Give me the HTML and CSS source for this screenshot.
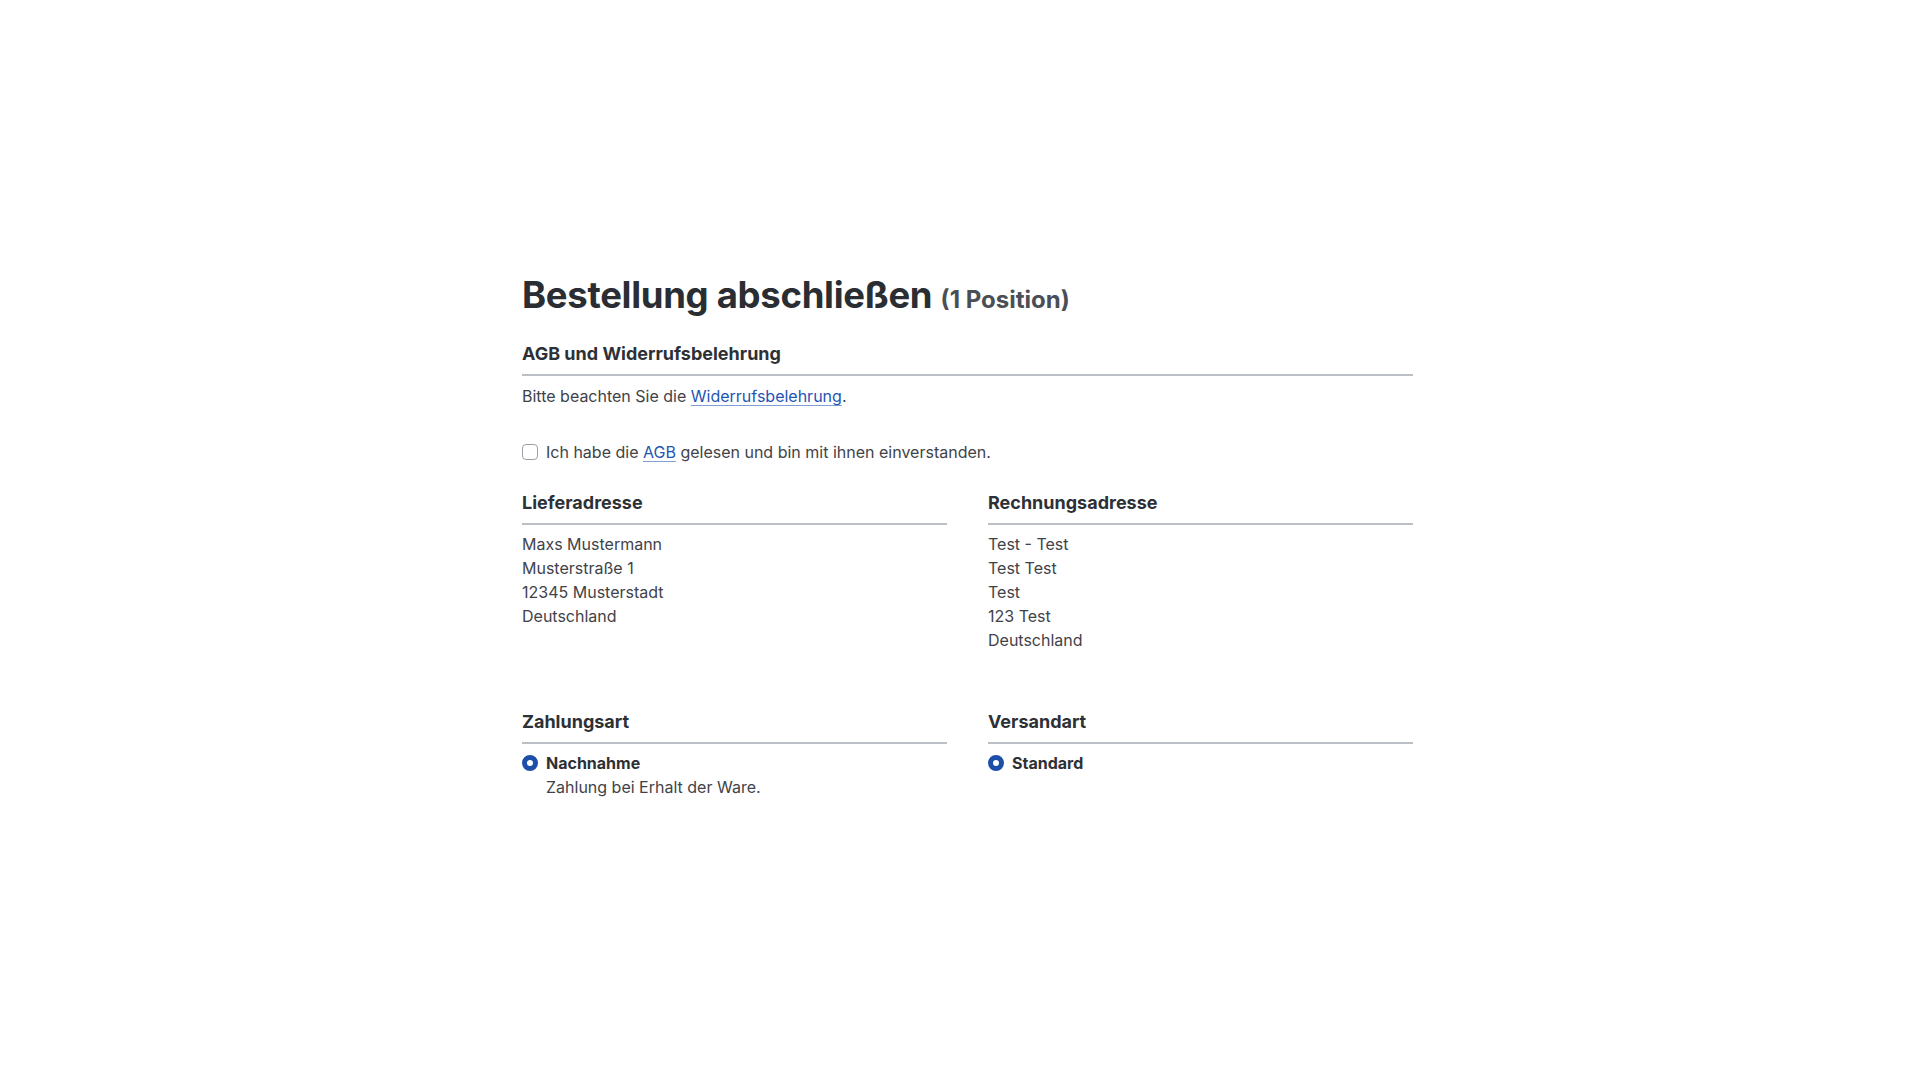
FILE: index.html
```html
<!DOCTYPE html>
<html lang="de">
<head>
  <meta charset="UTF-8">
  <meta name="viewport" content="width=device-width, initial-scale=1.0">
  <title>Bestellung abschließen</title>
  <link rel="stylesheet" href="styles.css">
</head>
<body>
  <main class="checkout">
    <h1 class="checkout__title">Bestellung abschließen <small>(1 Position)</small></h1>

    <section class="block">
      <h3 class="block__title">AGB und Widerrufsbelehrung</h3>
      <p class="block__text">Bitte beachten Sie die <a href="#">Widerrufsbelehrung</a>.</p>
      <label class="check">
        <input type="checkbox" class="check__box">
        <span>Ich habe die <a href="#">AGB</a> gelesen und bin mit ihnen einverstanden.</span>
      </label>
    </section>

    <div class="cols cols--address">
      <section class="block">
        <h3 class="block__title">Lieferadresse</h3>
        <address class="address">
          Maxs Mustermann<br>
          Musterstraße 1<br>
          12345 Musterstadt<br>
          Deutschland
        </address>
      </section>
      <section class="block">
        <h3 class="block__title">Rechnungsadresse</h3>
        <address class="address">
          Test - Test<br>
          Test Test<br>
          Test<br>
          123 Test<br>
          Deutschland
        </address>
      </section>
    </div>

    <div class="cols">
      <section class="block">
        <h3 class="block__title">Zahlungsart</h3>
        <label class="option">
          <input type="radio" name="payment" class="option__radio" checked>
          <span class="option__body">
            <strong>Nachnahme</strong>
            <span class="option__desc">Zahlung bei Erhalt der Ware.</span>
          </span>
        </label>
      </section>
      <section class="block">
        <h3 class="block__title">Versandart</h3>
        <label class="option">
          <input type="radio" name="shipping" class="option__radio" checked>
          <span class="option__body">
            <strong>Standard</strong>
          </span>
        </label>
      </section>
    </div>
  </main>
</body>
</html>
```

FILE: styles.css
```css
body {
  margin: 0;
  padding: 0 0 0 15px;
  background: #fff;
  color: #3f4349;
  font-family: Inter, "Noto Sans", sans-serif;
  font-size: 16px;
  line-height: 24px;
}

a {
  color: #1f55b3;
  text-decoration: underline;
  text-underline-offset: 3px;
  text-decoration-color: #7f9fd6;
}

.checkout {
  width: 891px;
  margin: 0 auto;
  padding-top: 272px;
}

.checkout__title {
  margin: 0 0 17px;
  font-size: 36.5px;
  line-height: 46px;
  font-weight: 700;
  color: #2a2e33;
  letter-spacing: -0.3px;
}

.checkout__title small {
  font-size: 24px;
  font-weight: 700;
  color: #4a4f56;
  letter-spacing: 0;
}

.block__title {
  margin: 0;
  padding-bottom: 7px;
  border-bottom: 2px solid #bcc0c6;
  font-size: 18px;
  line-height: 27px;
  font-weight: 700;
  color: #2d3136;
}

.block__text {
  margin: 8px 0 32px;
}

.check {
  display: flex;
  align-items: center;
  gap: 8px;
}

.check__box {
  appearance: none;
  margin: 0;
  width: 16px;
  height: 16px;
  border: 1.5px solid #9ca1a8;
  border-radius: 4px;
  background: #fff;
}

.cols {
  display: grid;
  grid-template-columns: 1fr 1fr;
  gap: 41px;
}

.cols--address {
  margin-top: 25px;
  margin-bottom: 56px;
}

.address {
  margin-top: 7px;
  font-style: normal;
}

.option {
  display: flex;
  align-items: flex-start;
  gap: 8px;
  margin-top: 7px;
}

.option__radio {
  appearance: none;
  margin: 4px 0 0;
  width: 16px;
  height: 16px;
  border: 5px solid #1d4ea8;
  border-radius: 50%;
  background: #fff;
  flex: none;
}

.option__body {
  display: flex;
  flex-direction: column;
}

.option__body strong {
  font-weight: 700;
  color: #2d3136;
}
```
